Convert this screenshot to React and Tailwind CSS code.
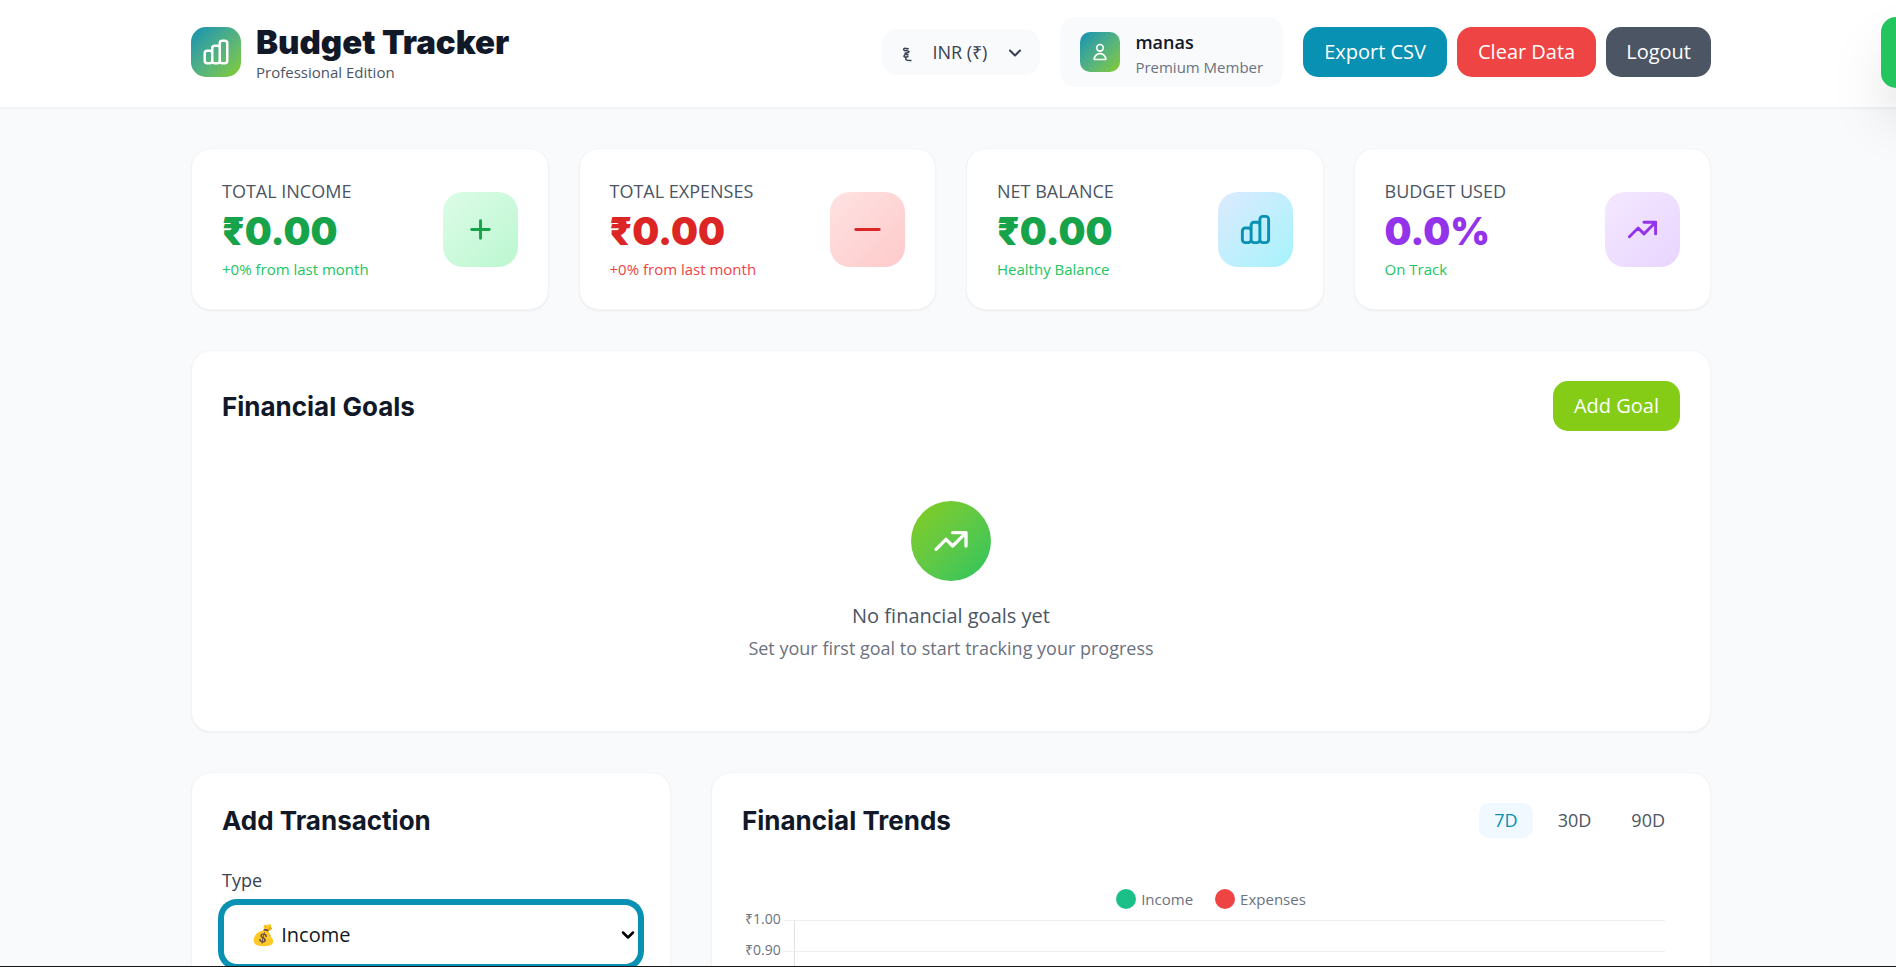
import { useState } from 'react';
import { ChevronDown } from 'lucide-react';

const stats = [
    { label: 'Total Income', value: '₹0.00', note: '+0% from last month', icon: 'plus', valueColor: 'text-[#16a34a]', noteColor: 'text-[#22c55e]', box: 'from-[#dcfce7] to-[#bbf7d0] text-[#16a34a]' },
    { label: 'Total Expenses', value: '₹0.00', note: '+0% from last month', icon: 'minus', valueColor: 'text-[#dc2626]', noteColor: 'text-[#ef4444]', box: 'from-[#fee2e2] to-[#fecaca] text-[#dc2626]' },
    { label: 'Net Balance', value: '₹0.00', note: 'Healthy Balance', icon: 'bars', valueColor: 'text-[#16a34a]', noteColor: 'text-[#22c55e]', box: 'from-[#dbeafe] to-[#a5f3fc] text-[#0891b2]' },
    { label: 'Budget Used', value: '0.0%', note: 'On Track', icon: 'trend', valueColor: 'text-[#9333ea]', noteColor: 'text-[#22c55e]', box: 'from-[#f3e8ff] to-[#e9d5ff] text-[#9333ea]' },
];

const ticks = ['₹1.00', '₹0.90', '₹0.80', '₹0.70'];

const icons = {
    plus: 'M12 6v6m0 0v6m0-6h6m-6 0H6',
    minus: 'M20 12H4',
    bars: 'M9 19v-6a2 2 0 00-2-2H5a2 2 0 00-2 2v6a2 2 0 002 2h2a2 2 0 002-2zm0 0V9a2 2 0 012-2h2a2 2 0 012 2v10m-6 0a2 2 0 002 2h2a2 2 0 002-2m0 0V5a2 2 0 012-2h2a2 2 0 012 2v14a2 2 0 01-2 2h-2a2 2 0 01-2-2z',
    trend: 'M13 7h8m0 0v8m0-8l-8 8-4-4-6 6',
    user: 'M16 7a4 4 0 11-8 0 4 4 0 018 0zM12 14a7 7 0 00-7 7h14a7 7 0 00-7-7z',
};

const Icon = ({ name, className }) => (
    <svg className={className} viewBox="0 0 24 24" fill="none" stroke="currentColor" strokeWidth="2" strokeLinecap="round" strokeLinejoin="round">
        <path d={icons[name]} />
    </svg>
);

const Header = () => {
    const [currency, setCurrency] = useState('INR');

    return (
        <header className="bg-white border-b border-[#f3f4f6] shadow-xs pl-[6px]">
            <div className="max-w-[1600px] mx-auto px-10 pt-[17px] pb-5 flex items-center justify-between">
                <div className="flex items-center gap-[15px]">
                    <div className="size-[50px] rounded-[15px] bg-linear-to-br from-[#0891b2] to-[#84cc16] flex items-center justify-center text-white">
                        <Icon name="bars" className="size-[30px]" />
                    </div>
                    <div className="pt-[2px]">
                        <h1 className="font-[Inter] font-black text-[33px] leading-[38px] text-[#111827]">Budget Tracker</h1>
                        <p className="text-[15px] leading-[22px] text-[#4b5563]">Professional Edition</p>
                    </div>
                </div>

                <div className="flex items-center gap-5">
                    <div className="flex items-center bg-[#f9fafb] rounded-[15px] h-[46px] pl-5 text-[#374151]">
                        <svg className="w-[10px] h-[15px] mt-[5px]" viewBox="0 0 10 15" fill="none" stroke="currentColor" strokeWidth="1.5">
                            <path d="M2 3.500C1 2 2.500 .8 4 1.500 5 2 6 2 6.500 1.200M2 3.500C4 3.500 7 3.500 7 4.800 7 6 4.500 5.800 2.500 6.200M6.500 8C4.500 6.800 2 7.500 2 9.200 2 10.500 4.500 10.300 6.500 9.300M4 10.500C3 12.500 4 13.800 9.500 13.500" />
                        </svg>
                        <div className="relative">
                            <select
                                aria-label="Currency"
                                value={currency}
                                onChange={(e) => setCurrency(e.target.value)}
                                className="appearance-none bg-transparent h-[46px] pl-5 pr-[53px] text-[18px] font-medium outline-none"
                            >
                                <option value="INR">INR (₹)</option>
                            </select>
                            <ChevronDown size={20} strokeWidth={2.5} className="absolute right-[15px] top-[14px] pointer-events-none" />
                        </div>
                    </div>

                    <div className="flex items-center gap-[15px] bg-[#f9fafb] rounded-[15px] h-[70px] px-5">
                        <div className="size-10 rounded-[10px] bg-linear-to-br from-[#0891b2] to-[#84cc16] flex items-center justify-center text-white">
                            <Icon name="user" className="size-5" />
                        </div>
                        <div className="pt-[6px]">
                            <p className="text-[18px] leading-[25px] font-semibold text-[#111827]">manas</p>
                            <p className="text-[15px] leading-[25px] text-[#6b7280]">Premium Member</p>
                        </div>
                    </div>

                    <div className="flex items-center gap-[10px] text-[20px] font-medium text-white">
                        <button className="h-[50px] px-[21px] rounded-[15px] bg-[#0891b2]">Export CSV</button>
                        <button className="h-[50px] px-[21px] rounded-[15px] bg-[#ef4444]">Clear Data</button>
                        <button className="h-[50px] px-5 rounded-[15px] bg-[#4b5563]">Logout</button>
                    </div>
                </div>
            </div>
        </header>
    );
};

const App = () => {
    const [range, setRange] = useState('7D');
    const [type, setType] = useState('income');

    return (
        <div className="min-h-screen bg-[#f9fafb] font-['Open_Sans',sans-serif]">
            <Header />

            <main className="pl-[6px]">
                <div className="max-w-[1600px] mx-auto px-10 py-10 flex flex-col gap-10">
                    <section className="grid grid-cols-4 gap-[30px]">
                        {stats.map((s) => (
                            <div key={s.label} className="bg-white rounded-[20px] border border-[#f3f4f6] shadow-xs p-[30px] flex items-center justify-between">
                                <div>
                                    <p className="text-[18px] leading-[25px] font-medium uppercase text-[#4b5563]">{s.label}</p>
                                    <p className={`font-[Inter] font-black text-[38px] leading-[55px] ${s.valueColor}`}>{s.value}</p>
                                    <p className={`text-[15px] leading-5 ${s.noteColor}`}>{s.note}</p>
                                </div>
                                <div className={`size-[75px] rounded-[20px] bg-linear-to-br flex items-center justify-center ${s.box}`}>
                                    <Icon name={s.icon} className="size-[35px]" />
                                </div>
                            </div>
                        ))}
                    </section>

                    <section className="bg-white rounded-[20px] border border-[#f3f4f6] shadow-xs p-[30px]">
                        <div className="flex items-center justify-between">
                            <h2 className="font-[Inter] font-bold text-[26px] leading-[35px] text-[#111827]">Financial Goals</h2>
                            <button className="h-[50px] px-[21px] rounded-[15px] bg-[#84cc16] text-white text-[20px] font-medium">Add Goal</button>
                        </div>
                        <div className="flex flex-col items-center pt-[70px] pb-[35px]">
                            <div className="size-20 rounded-full bg-linear-to-br from-[#84cc16] to-[#22c55e] flex items-center justify-center text-white mb-5">
                                <Icon name="trend" className="size-10" />
                            </div>
                            <p className="text-[20px] leading-[30px] text-[#4b5563]">No financial goals yet</p>
                            <p className="text-[18px] leading-[35px] text-[#6b7280]">Set your first goal to start tracking your progress</p>
                        </div>
                    </section>

                    <section className="grid grid-cols-3 gap-10">
                        <div className="bg-white rounded-[20px] border border-[#f3f4f6] shadow-xs p-[30px]">
                            <h2 className="font-[Inter] font-bold text-[26px] leading-[35px] text-[#111827] mb-[30px]">Add Transaction</h2>
                            <label htmlFor="type" className="block text-[18px] leading-[25px] font-medium text-[#374151] mb-[10px]">Type</label>
                            <div className="relative">
                                <select
                                    id="type"
                                    value={type}
                                    onChange={(e) => setType(e.target.value)}
                                    className="appearance-none w-full h-[63px] px-[27px] rounded-[15px] border-2 border-[#0891b2] ring-4 ring-[#0891b2] bg-white text-[20px] text-[#111827] outline-none"
                                >
                                    <option value="income">💰 Income</option>
                                    <option value="expense">💸 Expense</option>
                                </select>
                                <ChevronDown size={20} strokeWidth={3} className="absolute right-[2px] top-[22px] pointer-events-none" />
                            </div>
                        </div>

                        <div className="col-span-2 bg-white rounded-[20px] border border-[#f3f4f6] shadow-xs p-[30px]">
                            <div className="flex items-center justify-between mb-[51px]">
                                <h2 className="font-[Inter] font-bold text-[26px] leading-[35px] text-[#111827]">Financial Trends</h2>
                                <div className="flex gap-[10px] text-[18px] font-medium">
                                    {['7D', '30D', '90D'].map((r) => (
                                        <button
                                            key={r}
                                            onClick={() => setRange(r)}
                                            className={`h-[35px] px-[15px] rounded-[10px] ${range === r ? 'bg-[#f0f9ff] text-[#0891b2]' : 'text-[#4b5563]'}`}
                                        >
                                            {r}
                                        </button>
                                    ))}
                                </div>
                            </div>
                            <div className="flex justify-center gap-[22px] text-[15px] leading-5 text-[#6b7280] mb-[11px]">
                                <span className="flex items-center gap-[5px]"><span className="size-5 rounded-full bg-[#1bc088]" />Income</span>
                                <span className="flex items-center gap-[5px]"><span className="size-5 rounded-full bg-[#ef4444]" />Expenses</span>
                            </div>
                            <div className="pr-[15px]">
                                {ticks.map((t) => (
                                    <div key={t} className="flex h-[31px]">
                                        <span className="w-[42px] -mt-[9px] pl-[3px] text-[14px] leading-4 text-[#6b7280]">{t}</span>
                                        <span className="w-[10px] border-t border-[#eeeff1]" />
                                        <span className="flex-1 border-t border-l border-t-[#eeeff1] border-l-[#e0e1e4]" />
                                    </div>
                                ))}
                            </div>
                        </div>
                    </section>
                </div>
            </main>

            {/* toast sliding in from the right edge */}
            <div className="fixed top-[17px] -right-[360px] w-[375px] h-[71px] rounded-[15px] bg-[#22c55e] shadow-[0_31px_62px_-15px_rgba(0,0,0,0.25)]" />
            <div className="fixed bottom-0 inset-x-0 h-px bg-neutral-900" />
        </div>
    );
};

export default App;
